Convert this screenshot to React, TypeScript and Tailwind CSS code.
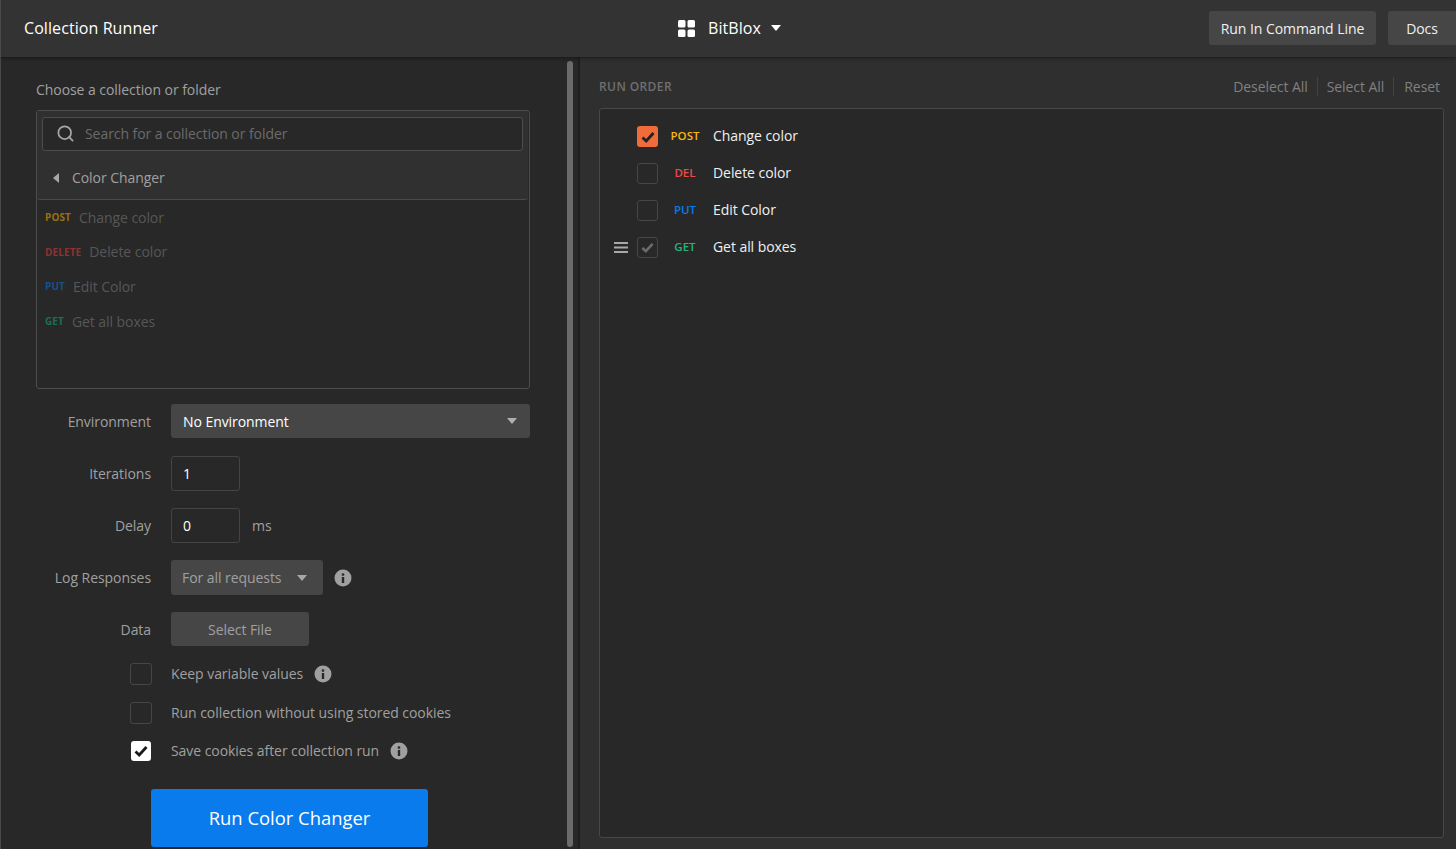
import { Search } from 'lucide-react';

const font = { fontFamily: '"Open Sans", sans-serif' };

function Check({ color, size = 14, weight = 2.4 }: { color: string; size?: number; weight?: number }) {
  return (
    <svg width={size} height={size} viewBox="0 0 14 14" fill="none">
      <path d="M1.5 7.5 L5.2 11 L12.5 3" stroke={color} strokeWidth={weight} />
    </svg>
  );
}

function Info() {
  return (
    <svg width="18" height="18" viewBox="0 0 18 18">
      <circle cx="9" cy="9" r="8.5" fill="#a0a0a0" />
      <rect x="7.8" y="8" width="2.4" height="6" fill="#282828" />
      <rect x="7.8" y="4.4" width="2.4" height="2.3" fill="#282828" />
    </svg>
  );
}

function Caret({ color = '#b0b0b0', w = 10 }: { color?: string; w?: number }) {
  return (
    <svg width={w} height={w * 0.6} viewBox="0 0 10 6">
      <path d="M0 0 H10 L5 6 Z" fill={color} />
    </svg>
  );
}

function FormRow({ label, className, children }: { label: string; className: string; children: React.ReactNode }) {
  return (
    <div className={`flex items-center ${className}`}>
      <div className="w-[150px] shrink-0 text-right text-[14px] text-[#a0a0a0]">{label}</div>
      <div className="ml-5 flex flex-1 items-center">{children}</div>
    </div>
  );
}

function OptionRow({ label, on, info, className }: { label: string; on?: boolean; info?: boolean; className: string }) {
  return (
    <div className={`flex h-5 items-center ${className}`}>
      <div className="ml-[129px] flex w-[41px] shrink-0">
        {on ? (
          <div className="ml-px flex h-[20px] w-[20px] items-center justify-center rounded-[3px] bg-white">
            <Check color="#1a1a1a" weight={2.8} />
          </div>
        ) : (
          <div className="h-[22px] w-[22px] rounded-[3px] border border-[#464646]" />
        )}
      </div>
      <span className="mb-[2px] text-[14px] text-[#a0a0a0]">{label}</span>
      {info && (
        <span className="ml-[11px] flex">
          <Info />
        </span>
      )}
    </div>
  );
}

const sourceItems = [
  { method: 'POST', color: 'text-[#99700f]', name: 'Change color', className: 'h-[35px]' },
  { method: 'DELETE', color: 'text-[#8f3232]', name: 'Delete color', className: 'h-[34px]' },
  { method: 'PUT', color: 'text-[#17508f]', name: 'Edit Color', className: 'h-[35px]' },
  { method: 'GET', color: 'text-[#1d6f54]', name: 'Get all boxes', className: 'h-[35px]' },
];

const runItems = [
  { method: 'POST', color: 'text-[#fcb60d]', name: 'Change color', state: 'on' },
  { method: 'DEL', color: 'text-[#ed4b48]', name: 'Delete color', state: 'off' },
  { method: 'PUT', color: 'text-[#097bed]', name: 'Edit Color', state: 'off' },
  { method: 'GET', color: 'text-[#26b47f]', name: 'Get all boxes', state: 'muted' },
];

export default function App() {
  return (
    <div className="flex h-[849px] w-[1456px] flex-col overflow-hidden bg-[#282828] tracking-[-0.06px]" style={font}>
      {/* top bar */}
      <header className="relative z-10 flex h-[57px] shrink-0 items-center border-l border-[#4a4a4a] bg-[#333333] pb-px pl-[23px] shadow-[0_1px_4px_rgba(0,0,0,0.45)]">
        <div className="mb-px w-[654px] text-[16px] tracking-[0.08px] text-white">Collection Runner</div>
        <div className="flex items-center">
          <svg width="17" height="17" viewBox="0 0 17 17" fill="#ffffff">
            <rect x="0" y="0" width="7.5" height="7.5" rx="1.5" />
            <rect x="9.5" y="0" width="7.5" height="7.5" rx="1.5" />
            <rect x="0" y="9.5" width="7.5" height="7.5" rx="1.5" />
            <rect x="9.5" y="9.5" width="7.5" height="7.5" rx="1.5" />
          </svg>
          <span className="mb-px ml-[13px] text-[16px] tracking-[0.08px] text-white">BitBlox</span>
          <span className="ml-[10px] flex">
            <Caret color="#ffffff" />
          </span>
        </div>
        <div className="ml-auto flex gap-3">
          <div className="flex h-[34px] w-[167px] items-center justify-center rounded-[3px] bg-[#464646] text-[14px] text-[#f0f0f0]">
            Run In Command Line
          </div>
          <div className="flex h-[34px] w-[68px] items-center justify-center rounded-l-[3px] bg-[#464646] text-[14px] text-[#f0f0f0]">
            Docs
          </div>
        </div>
      </header>

      <div className="flex min-h-0 flex-1">
        {/* left panel */}
        <aside className="flex w-[567px] shrink-0 flex-col border-l border-[#4a4a4a] pr-[37px]">
          <div className="ml-[35px] mt-[23px] text-[14px] leading-[19px] text-[#a0a0a0]">Choose a collection or folder</div>
          <div className="ml-[35px] mt-[11px] flex h-[279px] flex-col rounded-[3px] border border-[#4c4c4c]">
            <div className="mr-px rounded-b-[3px] border-b border-[#4a4a4a] bg-[#303030] pl-[5px] pr-[5px] pt-[6px]">
              <div className="flex h-[34px] items-center rounded-[3px] border border-[#4c4c4c] bg-[#282828] pb-px pl-[13px]">
                <Search size={19} color="#a6a6a6" strokeWidth={2.2} />
                <span className="ml-[10px] text-[14px] text-[#6b6b6b]">Search for a collection or folder</span>
              </div>
              <div className="flex h-[48px] items-center pl-[11px] pt-[5px]">
                <svg width="6" height="10" viewBox="0 0 6 10">
                  <path d="M6 0 V10 L0 5 Z" fill="#a8a8a8" />
                </svg>
                <span className="ml-[13px] text-[14px] text-[#a0a0a0]">Color Changer</span>
              </div>
            </div>
            <div className="pl-2">
              {sourceItems.map((item) => (
                <div key={item.name} className={`flex items-center ${item.className}`}>
                  <span className={`text-[10px] font-bold tracking-[0.1px] ${item.color}`}>{item.method}</span>
                  <span className="mb-px ml-2 text-[14px] text-[#575757]">{item.name}</span>
                </div>
              ))}
            </div>
          </div>

          <FormRow label="Environment" className="mt-[15px] h-[34px]">
            <div className="flex h-[34px] w-[359px] items-center justify-between rounded-[3px] bg-[#464646] pl-3 pr-[13px]">
              <span className="text-[14px] font-medium text-white">No Environment</span>
              <Caret color="#b0b0b0" />
            </div>
          </FormRow>
          <FormRow label="Iterations" className="mt-[18px] h-[35px]">
            <div className="flex h-[35px] w-[69px] items-center rounded-[3px] border border-[#444444] pl-[11px] text-[14px] text-white">1</div>
          </FormRow>
          <FormRow label="Delay" className="mt-[17px] h-[35px]">
            <div className="flex h-[35px] w-[69px] items-center rounded-[3px] border border-[#444444] pl-[11px] text-[14px] text-white">0</div>
            <span className="ml-[12px] text-[14px] text-[#a0a0a0]">ms</span>
          </FormRow>
          <FormRow label="Log Responses" className="mt-[17px] h-[35px]">
            <div className="flex h-[35px] w-[152px] items-center justify-between rounded-[3px] bg-[#464646] pl-[11px] pr-[16px]">
              <span className="text-[14px] text-[#a0a0a0]">For all requests</span>
              <Caret color="#a8a8a8" />
            </div>
            <span className="ml-[11px] flex">
              <Info />
            </span>
          </FormRow>
          <FormRow label="Data" className="mt-[17px] h-[34px]">
            <div className="flex h-[34px] w-[138px] items-center justify-center rounded-[3px] bg-[#464646] text-[14px] text-[#a0a0a0]">
              Select File
            </div>
          </FormRow>

          <OptionRow label="Keep variable values" info className="mt-[18px]" />
          <OptionRow label="Run collection without using stored cookies" className="mt-[19px]" />
          <OptionRow label="Save cookies after collection run" on info className="mt-[18px]" />

          <div className="ml-[150px] mt-[28px] flex h-[58px] w-[277px] shrink-0 items-center justify-center rounded-[3px] bg-[#097bed] text-[18.4px] tracking-normal text-white">
            Run Color Changer
          </div>
        </aside>

        {/* scrollbar */}
        <div className="w-[8px] shrink-0 pt-[4px]">
          <div className="h-[786px] w-[6px] rounded-[3px] bg-[#6b6b6b]" />
        </div>

        {/* splitter */}
        <div className="ml-[3px] w-[2px] shrink-0 bg-[#1f1f1f]" />

        {/* run order */}
        <main className="flex min-w-0 flex-1 flex-col bg-[#2f2f2f] pl-[19px] pr-[12px]">
          <div className="flex h-[51px] shrink-0 items-center justify-between pt-[8px]">
            <span className="text-[12px] font-semibold tracking-[0.4px] text-[#6f6f6f]">RUN ORDER</span>
            <div className="flex items-center pr-[4px] text-[14px] text-[#808080]">
              <span>Deselect All</span>
              <span className="mx-[9px] h-[19px] w-px bg-[#444444]" />
              <span>Select All</span>
              <span className="ml-[9px] mr-[10px] h-[19px] w-px bg-[#444444]" />
              <span>Reset</span>
            </div>
          </div>
          <div className="mb-[11px] flex-1 rounded-[3px] border border-[#484848] bg-[#282828] pt-[8px]">
            {runItems.map((item) => (
              <div key={item.name} className="flex h-[37px] items-center">
                <div className="mt-[2px] flex w-[37px] shrink-0 justify-end pr-[9px]">
                  {item.state === 'muted' && (
                    <svg width="14" height="11" viewBox="0 0 14 11" fill="#a8a8a8">
                      <rect y="0" width="14" height="2" />
                      <rect y="4.5" width="14" height="2" />
                      <rect y="9" width="14" height="2" />
                    </svg>
                  )}
                </div>
                {item.state === 'on' ? (
                  <div className="mt-[2px] flex h-[21px] w-[21px] items-center justify-center rounded-[3px] bg-[#f26b3a]">
                    <Check color="#222222" weight={2.8} />
                  </div>
                ) : (
                  <div className="mt-[2px] flex h-[21px] w-[21px] items-center justify-center rounded-[3px] border border-[#464646]">
                    {item.state === 'muted' && <Check color="#6b6b6b" size={13} weight={2.8} />}
                  </div>
                )}
                <div className={`ml-[8px] w-[38px] shrink-0 text-center text-[11.5px] font-semibold tracking-normal ${item.color}`}>{item.method}</div>
                <span className="ml-[9px] text-[14px] text-[#f0f0f0]">{item.name}</span>
              </div>
            ))}
          </div>
        </main>
      </div>
    </div>
  );
}
